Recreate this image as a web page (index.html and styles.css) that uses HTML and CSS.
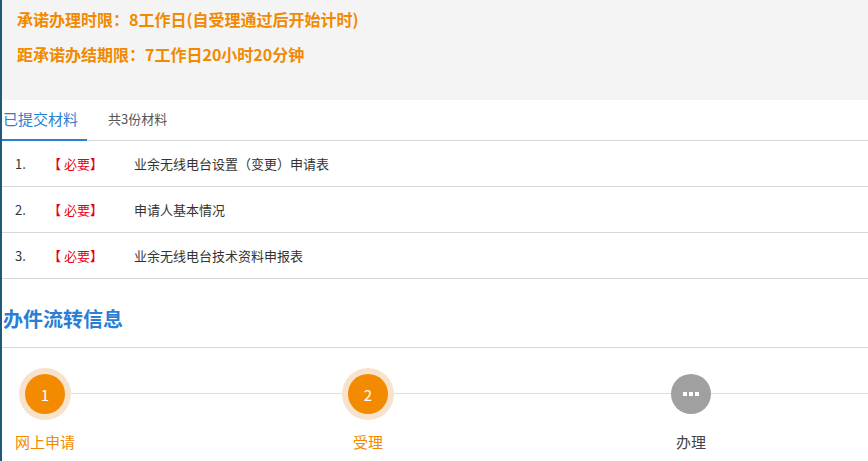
FILE: index.html
```
<!DOCTYPE html>
<html>
<head>
    <title>办件详情</title>
    <link rel="stylesheet" href="styles.css">
</head>
<body>
    <div class="page">
        <div class="promise">
            <p>承诺办理时限：8工作日(自受理通过后开始计时)</p>
            <p>距承诺办结期限：7工作日20小时20分钟</p>
        </div>

        <div class="tabs">
            <div class="tab active">已提交材料</div>
            <div class="tab">共3份材料</div>
        </div>
        <ul class="materials">
            <li>
                <span class="num">1.</span>
                <span class="tag">【 必要】</span>
                <span class="name">业余无线电台设置（变更）申请表</span>
            </li>
            <li>
                <span class="num">2.</span>
                <span class="tag">【 必要】</span>
                <span class="name">申请人基本情况</span>
            </li>
            <li>
                <span class="num">3.</span>
                <span class="tag">【 必要】</span>
                <span class="name">业余无线电台技术资料申报表</span>
            </li>
        </ul>

        <h2 class="section-title">办件流转信息</h2>
        <div class="steps">
            <div class="step done">
                <div class="dot">1</div>
                <div class="label">网上申请</div>
            </div>
            <div class="step done">
                <div class="dot">2</div>
                <div class="label">受理</div>
            </div>
            <div class="step todo">
                <div class="dot"><i></i><i></i><i></i></div>
                <div class="label">办理</div>
            </div>
        </div>
    </div>
</body>
</html>
```

FILE: styles.css
```
body {
    margin: 0;
    font-family: "Noto Sans CJK SC", "Liberation Sans", sans-serif;
    background: #fff;
    color: #333;
    overflow: hidden;
}
.page {
    border-left: 2px solid #1f5a7c;
    min-height: 461px;
    box-sizing: border-box;
}
.promise {
    background-color: #f4f4f4;
    height: 100px;
    padding: 7px 0 0 15px;
    box-sizing: border-box;
}
.promise p {
    margin: 0 0 11px;
    height: 24px;
    line-height: 24px;
    font-size: 16px;
    font-weight: bold;
    color: #f18a00;
}
.tabs {
    display: flex;
    height: 41px;
    border-bottom: 1px solid #d8d8d8;
    box-sizing: border-box;
}
.tab {
    font-size: 13px;
    line-height: 38px;
    color: #555;
    padding: 0 0 0 21px;
}
.tab.active {
    font-size: 15px;
    color: #2a7fd4;
    width: 85px;
    padding-left: 1px;
    border-bottom: 2px solid #2a7fd4;
    margin-bottom: -1px;
    box-sizing: border-box;
}
.materials {
    list-style: none;
    margin: 0;
    padding: 0;
}
.materials li {
    display: flex;
    align-items: center;
    height: 46px;
    border-bottom: 1px solid #d8d8d8;
    box-sizing: border-box;
    font-size: 13px;
    padding-left: 13px;
    padding-bottom: 1px;
}
.materials .num {
    width: 33px;
    color: #333;
}
.materials .tag {
    width: 86px;
    color: #e60012;
}
.materials .name {
    color: #333;
}
.section-title {
    margin: 0;
    padding: 23px 0 0 1px;
    height: 69px;
    box-sizing: border-box;
    border-bottom: 1px solid #d8d8d8;
    font-size: 20px;
    font-weight: bold;
    color: #2a7fd4;
    line-height: 34px;
}
.steps {
    display: flex;
    position: relative;
    padding-top: 26px;
}
.steps::before {
    content: "";
    position: absolute;
    left: 43px;
    right: 0;
    top: 45px;
    border-top: 1px solid #dddddd;
}
.step {
    width: 323px;
    flex: none;
    display: flex;
    flex-direction: column;
    align-items: center;
}
.step:first-child {
    margin-left: -118.5px;
}
.dot {
    position: relative;
    width: 40px;
    height: 40px;
    border-radius: 50%;
    display: flex;
    align-items: center;
    justify-content: center;
    gap: 2px;
    color: #fff;
    font-size: 15px;
    z-index: 1;
}
.done .dot {
    background-color: #f38a00;
    box-shadow: 0 0 0 6px #f7e2cb;
}
.todo .dot {
    background-color: #a0a0a0;
}
.todo .dot i {
    width: 4px;
    height: 4px;
    background: #fff;
}
.label {
    margin-top: 19px;
    font-size: 15px;
    line-height: 18px;
}
.done .label {
    color: #f18a00;
}
.todo .label {
    color: #444;
}
```
